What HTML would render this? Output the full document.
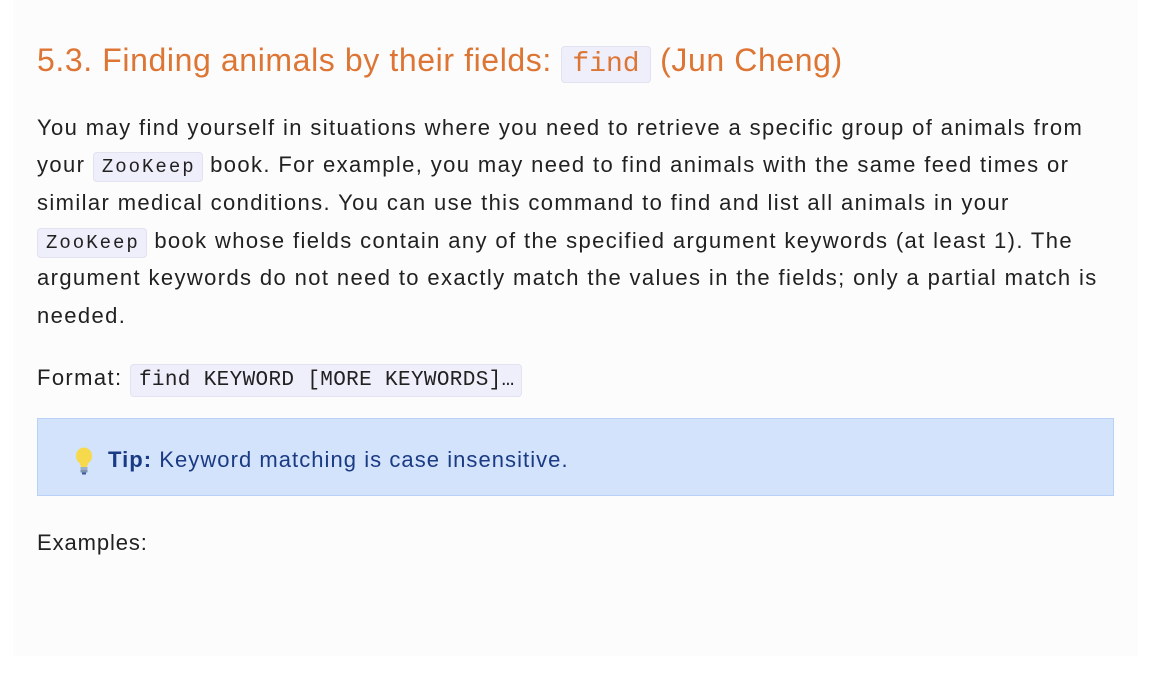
<!DOCTYPE html>
<html><head><meta charset="utf-8"><style>
html,body{margin:0;padding:0;background:#fff;width:1158px;height:688px;overflow:hidden}
.panel{position:absolute;left:13px;top:0;width:1125px;height:656px;background:#fcfcfc}
.c{position:absolute;left:24px;font-family:"Liberation Sans",sans-serif;color:#212121;white-space:nowrap}
h2{position:absolute;left:24px;top:38px;margin:0;font-weight:normal;font-size:32px;letter-spacing:0.6px;color:#dd7534;font-family:"Liberation Sans",sans-serif;white-space:nowrap;line-height:44px}
code{font-family:"Liberation Mono",monospace;background:#efeefb;border:1px solid #e2e2f0;border-radius:4px;line-height:1}
h2 code{font-size:28px;padding:2px 10px;color:#dd7534;letter-spacing:0}
.l{font-size:22px;letter-spacing:1.38px;line-height:30px}
.l code{font-size:19px;letter-spacing:2px;padding:3px 6px 3px 8px}
.f code{font-size:21px;letter-spacing:0.35px;padding:4px 6px 4px 8px}
.tip{position:absolute;left:24px;top:418px;width:1075px;height:76px;background:#d3e3fb;border:1px solid #b9d1f6;font-family:"Liberation Sans",sans-serif;font-size:22px;letter-spacing:1.05px;color:#1a3a84;line-height:82px}
.tip svg{position:absolute;left:36px;top:28px;display:block}
.tip .t{position:absolute;left:70px;top:0;white-space:nowrap}
</style></head><body>
<div class="panel">
<h2>5.3. Finding animals by their fields: <code>find</code> (Jun Cheng)</h2>
<div class="c l" style="top:113px">You may find yourself in situations where you need to retrieve a specific group of animals from</div>
<div class="c l" style="top:150px">your <code>ZooKeep</code> book. For example, you may need to find animals with the same feed times or</div>
<div class="c l" style="top:188px">similar medical conditions. You can use this command to find and list all animals in your</div>
<div class="c l" style="top:226px"><code>ZooKeep</code> book whose fields contain any of the specified argument keywords (at least 1). The</div>
<div class="c l" style="top:263px">argument keywords do not need to exactly match the values in the fields; only a partial match is</div>
<div class="c l" style="top:301px">needed.</div>
<div class="c l f" style="top:363px">Format: <code>find KEYWORD [MORE KEYWORDS]…</code></div>
<div class="tip"><svg width="20" height="30" viewBox="0 0 20 30"><ellipse cx="10" cy="9" rx="8" ry="8.5" fill="#f7d94c"/><path d="M5 14 L7 20 H13 L15 14Z" fill="#f7d94c"/><rect x="6.5" y="20" width="7" height="3" fill="#9bb0c8"/><rect x="6.5" y="23" width="7" height="2.5" fill="#7d93b0"/><rect x="8" y="25.5" width="4" height="2" fill="#3d5a9a"/></svg><span class="t"><b>Tip:</b> Keyword matching is case insensitive.</span></div>
<div class="c l" style="top:528px;letter-spacing:0.9px">Examples:</div>
</div>
</body></html>
